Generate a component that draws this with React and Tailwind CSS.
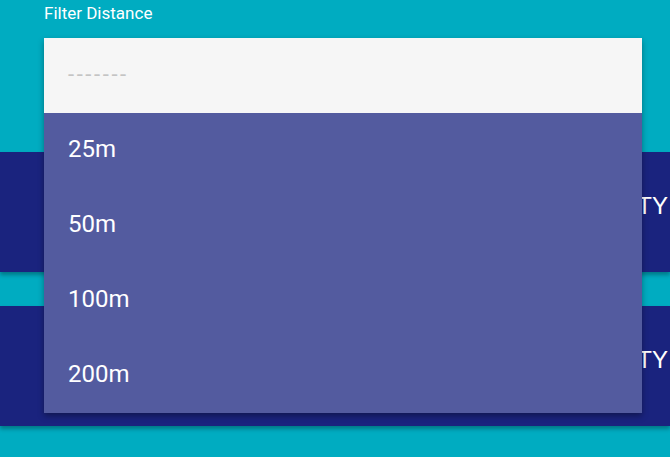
import React from 'react';

const options = ['25m', '50m', '100m', '200m'];

const Band = ({ label }) => (
    <div className="h-[120px] bg-[#1a237e] shadow-[0_3px_4px_rgba(0,0,0,0.3)] flex items-center justify-end pr-[2px] pb-[12px] overflow-hidden">
        <span
            className="whitespace-nowrap text-white text-[24px]"
            style={{ fontFamily: '"Liberation Sans", Arial, sans-serif' }}
        >
            {label}
        </span>
    </div>
);

const App = () => {
    return (
        <div
            className="relative w-[670px] h-[457px] bg-[#00acc1] overflow-hidden"
            style={{ fontFamily: 'Roboto, "Open Sans", sans-serif' }}
        >
            <div className="flex flex-col gap-[34px] pt-[152px]">
                <Band label="TY" />
                <Band label="TY" />
            </div>

            <div className="absolute left-[44px] top-0 w-[598px]">
                <div className="h-[27px] flex items-center text-white text-[17px]">
                    Filter Distance
                </div>
                <div className="mt-[11px] shadow-[0_3px_6px_rgba(0,0,0,0.35)]">
                    <div className="h-[75px] bg-[#f6f6f6] flex items-center px-6 pb-[2px]">
                        <span className="text-[#c4c4c4] text-[22px] tracking-[2.6px]">-------</span>
                    </div>
                    <ul className="bg-[#535b9f]">
                        {options.map((opt) => (
                            <li key={opt} className="h-[75px] flex items-center px-6 pb-[3px] text-white text-[24px]">
                                {opt}
                            </li>
                        ))}
                    </ul>
                </div>
            </div>
        </div>
    );
};

export default App;
